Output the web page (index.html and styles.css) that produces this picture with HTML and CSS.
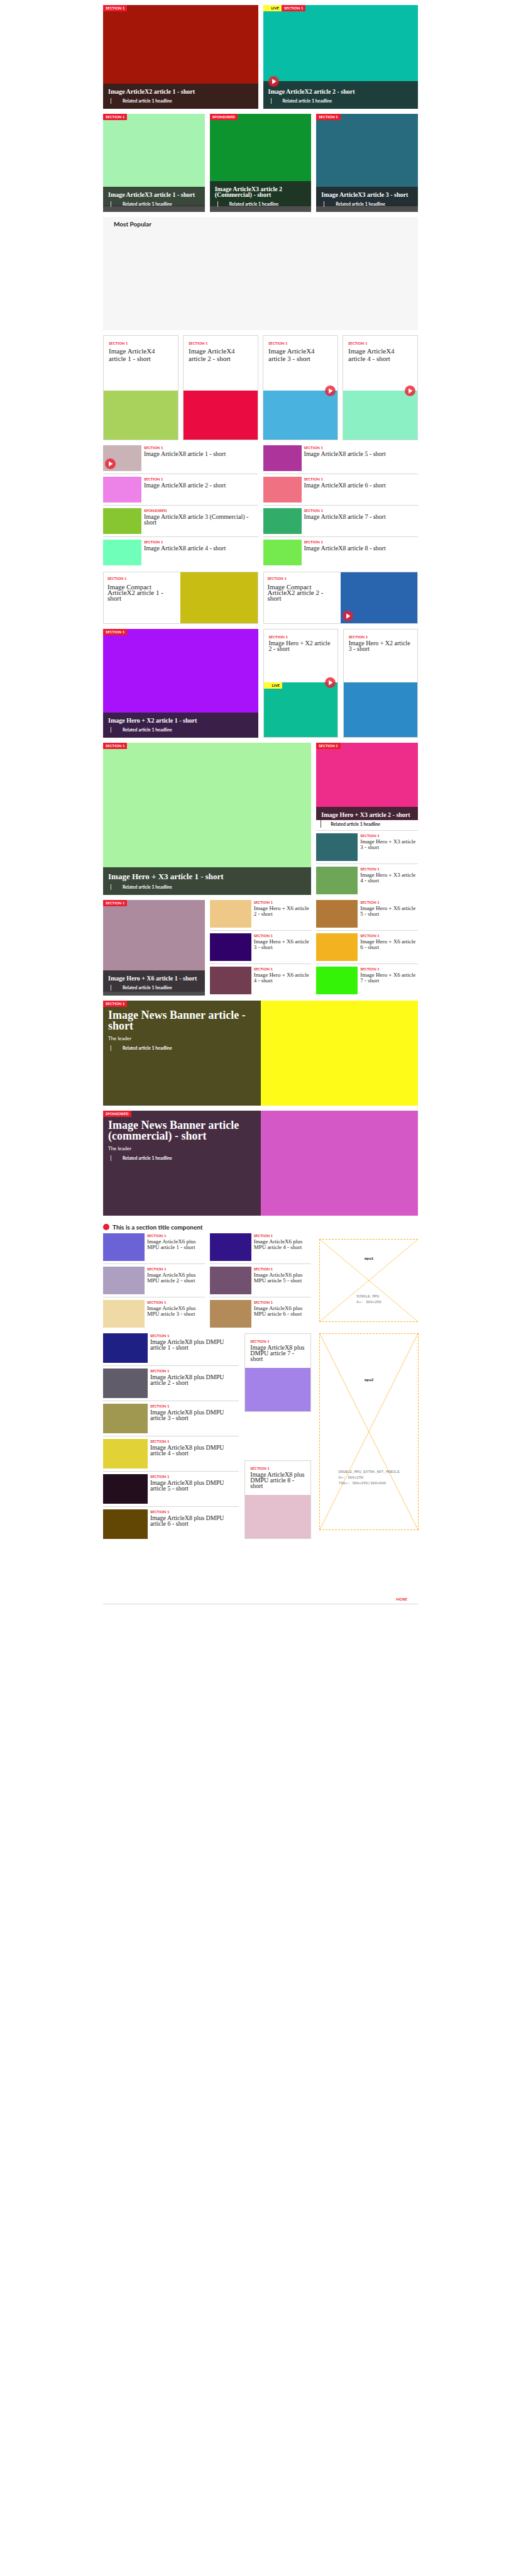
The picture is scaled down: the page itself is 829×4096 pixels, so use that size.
FILE: index.html
```html
<!DOCTYPE html>
<html lang="en">
<head>
<meta charset="utf-8">
<meta name="viewport" content="width=device-width, initial-scale=1">
<title>Article slices</title>
<link rel="stylesheet" href="styles.css">
</head>
<body>
<svg class="sprite" aria-hidden="true">
  <symbol id="play" viewBox="0 0 32 32"><circle cx="16" cy="16" r="16" fill="#ee1b30" fill-opacity=".8"/><path d="M11.5 8.5v15.5L23.5 16.2z" fill="#fff"/></symbol>
</svg>
<main class="page">

  <section class="grid two">
    <article class="hero tall c1"><div class="badges"><span class="badge">SECTION 1</span></div>
      <div class="overlay"><h2 class="title">Image ArticleX2 article 1 - short</h2><a class="related" href="#">Related article 1 headline</a></div></article>
    <article class="hero tall c2"><div class="badges"><span class="badge live">LIVE</span><span class="badge">SECTION 1</span></div>
      <div class="overlay video"><svg class="play"><use href="#play"/></svg><h2 class="title">Image ArticleX2 article 2 - short</h2><a class="related" href="#">Related article 1 headline</a></div></article>
  </section>

  <section class="grid three">
    <article class="hero third"><div class="fill c3"></div><div class="badges"><span class="badge">SECTION 1</span></div>
      <div class="overlay"><h2 class="title">Image ArticleX3 article 1 - short</h2><a class="related" href="#">Related article 1 headline</a></div></article>
    <article class="hero third"><div class="fill c4"></div><div class="badges"><span class="badge">SPONSORED</span></div>
      <div class="overlay"><h2 class="title">Image ArticleX3 article 2<br>(Commercial) - short</h2><a class="related" href="#">Related article 1 headline</a></div></article>
    <article class="hero third"><div class="fill c5"></div><div class="badges"><span class="badge">SECTION 1</span></div>
      <div class="overlay"><h2 class="title">Image ArticleX3 article 3 - short</h2><a class="related" href="#">Related article 1 headline</a></div></article>
  </section>

  <section class="popular"><h2 class="heading">Most Popular</h2></section>

  <section class="grid four">
    <article class="card large"><div class="copy"><span class="label">SECTION 1</span><h3 class="title">Image ArticleX4 article 1 - short</h3></div><div class="picture c6"></div></article>
    <article class="card large"><div class="copy"><span class="label">SECTION 1</span><h3 class="title">Image ArticleX4 article 2 - short</h3></div><div class="picture c7"></div></article>
    <article class="card large"><div class="copy"><span class="label">SECTION 1</span><h3 class="title">Image ArticleX4 article 3 - short</h3></div><div class="picture c8"><svg class="play"><use href="#play"/></svg></div></article>
    <article class="card large"><div class="copy"><span class="label">SECTION 1</span><h3 class="title">Image ArticleX4 article 4 - short</h3></div><div class="picture c9"><svg class="play"><use href="#play"/></svg></div></article>
  </section>

  <section class="grid two eight">
    <div class="list">
      <article class="item"><div class="thumb c10"><svg class="play"><use href="#play"/></svg></div><div class="text"><span class="label">SECTION 1</span><h3 class="title">Image ArticleX8 article 1 - short</h3></div></article>
      <article class="item"><div class="thumb c11"></div><div class="text"><span class="label">SECTION 1</span><h3 class="title">Image ArticleX8 article 2 - short</h3></div></article>
      <article class="item"><div class="thumb c12"></div><div class="text"><span class="label">SPONSORED</span><h3 class="title">Image ArticleX8 article 3 (Commercial) - short</h3></div></article>
      <article class="item"><div class="thumb c13"></div><div class="text"><span class="label">SECTION 1</span><h3 class="title">Image ArticleX8 article 4 - short</h3></div></article>
    </div>
    <div class="list">
      <article class="item"><div class="thumb c14"></div><div class="text"><span class="label">SECTION 1</span><h3 class="title">Image ArticleX8 article 5 - short</h3></div></article>
      <article class="item"><div class="thumb c15"></div><div class="text"><span class="label">SECTION 1</span><h3 class="title">Image ArticleX8 article 6 - short</h3></div></article>
      <article class="item"><div class="thumb c16"></div><div class="text"><span class="label">SECTION 1</span><h3 class="title">Image ArticleX8 article 7 - short</h3></div></article>
      <article class="item"><div class="thumb c17"></div><div class="text"><span class="label">SECTION 1</span><h3 class="title">Image ArticleX8 article 8 - short</h3></div></article>
    </div>
  </section>

  <section class="grid two">
    <article class="compact"><div class="copy"><span class="label">SECTION 1</span><h3 class="title">Image Compact ArticleX2 article 1 - short</h3></div><div class="picture c18"></div></article>
    <article class="compact"><div class="copy"><span class="label">SECTION 1</span><h3 class="title">Image Compact ArticleX2 article 2 - short</h3></div><div class="picture c19"><svg class="play"><use href="#play"/></svg></div></article>
  </section>

  <section class="grid two">
    <article class="hero lead c20"><div class="badges"><span class="badge">SECTION 1</span></div>
      <div class="overlay"><h2 class="title">Image Hero + X2 article 1 - short</h2><a class="related" href="#">Related article 1 headline</a></div></article>
    <div class="grid two">
      <article class="card side"><div class="copy"><span class="label">SECTION 1</span><h3 class="title">Image Hero + X2 article 2 - short</h3></div><div class="picture c21"><div class="badges"><span class="badge live">LIVE</span></div><svg class="play"><use href="#play"/></svg></div></article>
      <article class="card side"><div class="copy"><span class="label">SECTION 1</span><h3 class="title">Image Hero + X2 article 3 - short</h3></div><div class="picture c22"></div></article>
    </div>
  </section>

  <section class="grid three">
    <article class="hero wide c23"><div class="badges"><span class="badge">SECTION 1</span></div>
      <div class="overlay"><h2 class="title">Image Hero + X3 article 1 - short</h2><a class="related" href="#">Related article 1 headline</a></div></article>
    <div class="list narrow">
      <article class="item stacked">
        <div class="hero small c24"><div class="badges"><span class="badge">SECTION 1</span></div><div class="overlay"><h3 class="title">Image Hero + X3 article 2 - short</h3></div></div>
        <a class="related dark" href="#">Related article 1 headline</a></article>
      <article class="item"><div class="thumb c25"></div><div class="text"><span class="label">SECTION 1</span><h3 class="title">Image Hero + X3 article 3 - short</h3></div></article>
      <article class="item"><div class="thumb c26"></div><div class="text"><span class="label">SECTION 1</span><h3 class="title">Image Hero + X3 article 4 - short</h3></div></article>
    </div>
  </section>

  <section class="grid three">
    <article class="hero six"><div class="fill c27"></div><div class="badges"><span class="badge">SECTION 1</span></div>
      <div class="overlay"><h2 class="title">Image Hero + X6 article 1 - short</h2><a class="related" href="#">Related article 1 headline</a></div></article>
    <div class="list narrow">
      <article class="item"><div class="thumb c28"></div><div class="text"><span class="label">SECTION 1</span><h3 class="title">Image Hero + X6 article 2 - short</h3></div></article>
      <article class="item"><div class="thumb c29"></div><div class="text"><span class="label">SECTION 1</span><h3 class="title">Image Hero + X6 article 3 - short</h3></div></article>
      <article class="item"><div class="thumb c30"></div><div class="text"><span class="label">SECTION 1</span><h3 class="title">Image Hero + X6 article 4 - short</h3></div></article>
    </div>
    <div class="list narrow">
      <article class="item"><div class="thumb c31"></div><div class="text"><span class="label">SECTION 1</span><h3 class="title">Image Hero + X6 article 5 - short</h3></div></article>
      <article class="item"><div class="thumb c32"></div><div class="text"><span class="label">SECTION 1</span><h3 class="title">Image Hero + X6 article 6 - short</h3></div></article>
      <article class="item"><div class="thumb c33"></div><div class="text"><span class="label">SECTION 1</span><h3 class="title">Image Hero + X6 article 7 - short</h3></div></article>
    </div>
  </section>

  <article class="banner c34">
    <div class="panel olive"><span class="badge">SECTION 1</span><h2 class="title">Image News Banner article - short</h2><p class="leader">The leader</p><a class="related" href="#">Related article 1 headline</a></div>
  </article>

  <article class="banner c35">
    <div class="panel plum"><span class="badge">SPONSORED</span><h2 class="title">Image News Banner article (commercial) - short</h2><p class="leader">The leader</p><a class="related" href="#">Related article 1 headline</a></div>
  </article>

  <section>
    <h2 class="heading section-title">This is a section title component</h2>
    <div class="grid three six-row">
      <div class="list narrow">
        <article class="item"><div class="thumb c36"></div><div class="text"><span class="label">SECTION 1</span><h3 class="title">Image ArticleX6 plus MPU article 1 - short</h3></div></article>
        <article class="item"><div class="thumb c37"></div><div class="text"><span class="label">SECTION 1</span><h3 class="title">Image ArticleX6 plus MPU article 2 - short</h3></div></article>
        <article class="item"><div class="thumb c38"></div><div class="text"><span class="label">SECTION 1</span><h3 class="title">Image ArticleX6 plus MPU article 3 - short</h3></div></article>
      </div>
      <div class="list narrow">
        <article class="item"><div class="thumb c39"></div><div class="text"><span class="label">SECTION 1</span><h3 class="title">Image ArticleX6 plus MPU article 4 - short</h3></div></article>
        <article class="item"><div class="thumb c40"></div><div class="text"><span class="label">SECTION 1</span><h3 class="title">Image ArticleX6 plus MPU article 5 - short</h3></div></article>
        <article class="item"><div class="thumb c41"></div><div class="text"><span class="label">SECTION 1</span><h3 class="title">Image ArticleX6 plus MPU article 6 - short</h3></div></article>
      </div>
      <aside class="ad single">
        <svg class="cross" viewBox="0 0 100 100" preserveAspectRatio="none"><path d="M0 0L100 100M100 0L0 100"/></svg>
        <strong class="ad-name">mpu1</strong>
        <div class="ad-info">SINGLE_MPU<br>0+: 300x250</div>
      </aside>
    </div>
  </section>

  <section class="grid three">
    <div class="dmpu">
      <div class="list deep">
        <article class="item"><div class="thumb c42"></div><div class="text"><span class="label">SECTION 1</span><h3 class="title">Image ArticleX8 plus DMPU article 1 - short</h3></div></article>
        <article class="item"><div class="thumb c43"></div><div class="text"><span class="label">SECTION 1</span><h3 class="title">Image ArticleX8 plus DMPU article 2 - short</h3></div></article>
        <article class="item"><div class="thumb c44"></div><div class="text"><span class="label">SECTION 1</span><h3 class="title">Image ArticleX8 plus DMPU article 3 - short</h3></div></article>
        <article class="item"><div class="thumb c45"></div><div class="text"><span class="label">SECTION 1</span><h3 class="title">Image ArticleX8 plus DMPU article 4 - short</h3></div></article>
        <article class="item"><div class="thumb c46"></div><div class="text"><span class="label">SECTION 1</span><h3 class="title">Image ArticleX8 plus DMPU article 5 - short</h3></div></article>
        <article class="item"><div class="thumb c47"></div><div class="text"><span class="label">SECTION 1</span><h3 class="title">Image ArticleX8 plus DMPU article 6 - short</h3></div></article>
      </div>
      <div class="ends">
        <article class="card short"><div class="copy"><span class="label">SECTION 1</span><h3 class="title">Image ArticleX8 plus DMPU article 7 - short</h3></div><div class="picture c48"></div></article>
        <article class="card short"><div class="copy"><span class="label">SECTION 1</span><h3 class="title">Image ArticleX8 plus DMPU article 8 - short</h3></div><div class="picture c49"></div></article>
      </div>
    </div>
    <aside class="ad double">
      <svg class="cross" viewBox="0 0 100 100" preserveAspectRatio="none"><path d="M0 0L100 100M100 0L0 100"/></svg>
      <strong class="ad-name">mpu2</strong>
      <div class="ad-info">DOUBLE_MPU_EXTRA_NOT_MOBILE<br>0+: 300x250<br>768+: 300x250|300x600</div>
    </aside>
  </section>

  <footer class="footer"><a class="label" href="#">MORE</a></footer>
</main>
</body>
</html>
```

FILE: styles.css
```css
* { box-sizing: border-box; }
body { margin: 0; background: #fff; color: #222; font-family: Lato, "Open Sans", sans-serif; }
h2, h3, p { margin: 0; font-weight: 400; }
a { color: inherit; text-decoration: none; }
.sprite { display: none; }

.page { max-width: 501px; margin: 0 auto; padding: 8px 0; display: flex; flex-direction: column; gap: 8px; }
.grid { display: grid; gap: 8px; }
.two { grid-template-columns: repeat(2, minmax(0, 1fr)); }
.three { grid-template-columns: repeat(3, minmax(0, 1fr)); }
.four { grid-template-columns: repeat(4, minmax(0, 1fr)); gap: 7px; }

.title { font: 400 10px/9px "Liberation Serif", serif; }
.heading { font-size: 10px; line-height: 12px; font-weight: 700; }
.label { display: block; color: #ed1b30; font-size: 6px; line-height: 7px; font-weight: 700; }

/* section flags */
.badges { position: absolute; top: 0; left: 0; display: flex; }
.badge { display: block; padding: 0 4px; background: #ed1b2f; color: #fff; font-size: 6px; line-height: 10px; font-weight: 700; white-space: nowrap; }
.badge.live { padding-left: 13px; background: #fffb35; color: #111; }

.play { position: absolute; width: 17px; height: 17px; }

/* image heroes with a caption overlay */
.hero { position: relative; display: flex; flex-direction: column; justify-content: flex-end; }
.hero.tall { height: 165px; }
.hero.third { height: 156px; background: #4e4e4e; }
.hero.lead { height: 173px; }
.hero.wide { height: 242px; grid-column: span 2; }
.hero.small { height: 123px; }
.hero.six { height: 152px; background: #4e4e4e; }
.fill { position: absolute; top: 0; left: 0; right: 0; height: 146px; }
.overlay { position: relative; padding: 8px; background: rgba(34, 34, 34, .82); color: #fff; }
.overlay.video { padding-top: 12px; }
.overlay .play { top: -8px; left: 8px; }
.overlay .title { font-weight: 700; }
.third .overlay, .six .overlay { background: none; }
.third .overlay::before, .six .overlay::before { content: ""; position: absolute; inset: 0 0 9px; background: rgba(34, 34, 34, .82); }
.six .overlay::before { bottom: 6px; }
.third .overlay > *, .six .overlay > * { position: relative; }
.wide .title { font-size: 13px; line-height: 13px; }
.small .overlay { padding-bottom: 4px; }
.related { display: block; margin: 6px 0 0 4px; padding-left: 18px; border-left: 1px solid #ddd; font-size: 7px; line-height: 9px; font-weight: 700; }
.related.dark { margin: 0 0 0 7px; padding: 2px 0 1px 15px; border-color: #444; }

.popular { min-height: 180px; padding: 5px 17px; background: #f6f6f6; }

/* bordered cards, copy above picture */
.card { display: flex; flex-direction: column; border: 1px solid #d6d6d6; }
.copy { padding: 8px; }
.picture { position: relative; }
.card .picture { flex: 1; }
.card.large { height: 167px; }
.large .copy { height: 87px; }
.large .title { margin-top: 3px; font-size: 11px; line-height: 12px; }
.card .play { top: -8px; right: 3px; }
.card.side { height: 173px; }
.side .copy { height: 84px; }
.card.short { height: 125px; }
.short .copy { height: 54px; }
.side .title, .short .title { margin-top: 2px; }

.compact { height: 83px; display: grid; grid-template-columns: 1fr 1fr; border: 1px solid #d6d6d6; }
.compact .copy { padding: 6px; }
.compact .title { margin-top: 6px; font-size: 11px; }
.compact .play { left: 3px; bottom: 3px; }

/* thumbnail lists */
.item { display: grid; grid-template-columns: 61px minmax(0, 1fr); gap: 4px; }
.item + .item { margin-top: 4px; padding-top: 4px; border-top: 1px solid #d6d6d6; }
.thumb { position: relative; height: 41px; }
.thumb .play { left: 3px; bottom: 3px; }
.item .text .title { margin-top: 2px; }
.eight { padding-bottom: 2px; }
.narrow .item { grid-template-columns: 66px minmax(0, 1fr); }
.narrow .thumb { height: 44px; }
.narrow .text .title { font-size: 9px; }
.narrow .item.stacked { display: block; }
.deep .item { grid-template-columns: 71px minmax(0, 1fr); }
.deep .thumb { height: 47px; }

/* news banners */
.banner { height: 167px; display: grid; grid-template-columns: 1fr 1fr; }
.panel { padding-right: 8px; color: #fff; }
.panel .badge { width: max-content; }
.panel .title { margin: 5px 0 0 8px; font-size: 18px; line-height: 17px; font-weight: 700; }
.panel .related { margin: 6px 0 0 12px; }
.leader { margin: 6px 0 0 8px; font-size: 8px; line-height: 10px; }
.olive { background: #4e4c20; box-shadow: inset 0 0 3px #49492f; }
.plum { background: #472d42; box-shadow: inset 0 0 3px #483a46; }

.section-title { display: flex; align-items: center; gap: 5px; height: 20px; }
.section-title::before { content: ""; width: 10px; height: 10px; border-radius: 50%; background: #ed1b2f; }
.six-row { padding-bottom: 1px; }

/* advert placeholders */
.ad { position: relative; display: flex; flex-direction: column; align-items: center; justify-content: space-around; margin-left: 5px; border: 1px dashed #ffb020; font-family: "Liberation Mono", monospace; font-size: 6px; line-height: 9px; }
.ad.single { height: 132px; margin-top: 9px; border-right: 0; }
.ad.double { height: 313px; margin-right: -1px; }
.cross { position: absolute; inset: 0; width: 100%; height: 100%; }
.cross path { fill: none; stroke: #ffc966; stroke-width: 1px; vector-effect: non-scaling-stroke; }
.ad-name, .ad-info { position: relative; }
.ad-info { color: #777; }

.dmpu { grid-column: span 2; display: grid; grid-template-columns: minmax(0, 1fr) 106px; gap: 9px; }
.ends { display: flex; flex-direction: column; justify-content: space-between; }

.footer { margin-top: 84px; padding: 0 17px 4px; border-bottom: 1px solid #d6d6d6; display: flex; justify-content: flex-end; }

/* picture colours */
.c1 { background: #a31608; } .c2 { background: #07bda5; } .c3 { background: #a6f3b1; }
.c4 { background: #0d942e; } .c5 { background: #286b7f; } .c6 { background: #a8d25c; }
.c7 { background: #ea0b40; } .c8 { background: #49b2de; } .c9 { background: #8bf0c3; }
.c10 { background: #c9b3b6; } .c11 { background: #ed83e9; } .c12 { background: #87c630; }
.c13 { background: #70ffb8; } .c14 { background: #ac349b; } .c15 { background: #f07182; }
.c16 { background: #32ad69; } .c17 { background: #75ea4f; } .c18 { background: #c7bd13; }
.c19 { background: #2964ae; } .c20 { background: #a812fa; } .c21 { background: #0cbc95; }
.c22 { background: #2c8bc6; } .c23 { background: #aaf3a2; } .c24 { background: #ed2d89; }
.c25 { background: #2e6970; } .c26 { background: #6ea556; } .c27 { background: #ad8b9f; }
.c28 { background: #eec886; } .c29 { background: #300269; } .c30 { background: #723d51; }
.c31 { background: #b17838; } .c32 { background: #f3b320; } .c33 { background: #34f307; }
.c34 { background: #fdfb17; } .c35 { background: #d558c7; } .c36 { background: #6c62d7; }
.c37 { background: #ad9fc0; } .c38 { background: #efd9a4; } .c39 { background: #301488; }
.c40 { background: #725070; } .c41 { background: #b28b59; } .c42 { background: #1e2083; }
.c43 { background: #605c69; } .c44 { background: #a09750; } .c45 { background: #e1d337; }
.c46 { background: #220e1c; } .c47 { background: #624704; } .c48 { background: #a383e8; }
.c49 { background: #e4bfce; }
```
